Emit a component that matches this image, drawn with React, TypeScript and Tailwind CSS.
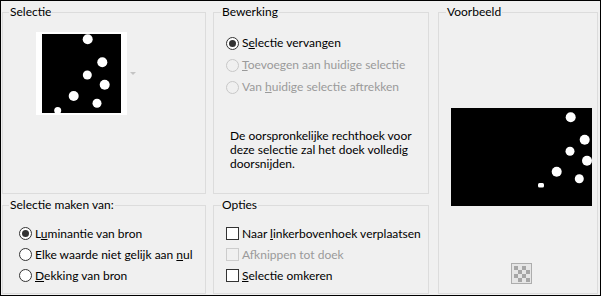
import React from 'react';

const font = { fontFamily: 'Lato, "Noto Sans", sans-serif' };

interface RadioProps {
  checked?: boolean;
  disabled?: boolean;
  children: React.ReactNode;
}

const Radio = ({ checked, disabled, children }: RadioProps) => (
  <div className="flex items-center h-[22px]">
    <span
      className={
        disabled
          ? 'w-[13px] h-[13px] rounded-full border border-[#c8c8c8] flex items-center justify-center'
          : 'w-[13px] h-[13px] rounded-full border border-[#333333] bg-white flex items-center justify-center'
      }
    >
      {checked && <span className="w-[7px] h-[7px] rounded-full bg-[#333333]" />}
    </span>
    <span className={disabled ? 'ml-[3px] text-[#9a9a9a]' : 'ml-[3px] text-black'}>{children}</span>
  </div>
);

interface CheckProps {
  disabled?: boolean;
  children: React.ReactNode;
}

const Check = ({ disabled, children }: CheckProps) => (
  <div className="flex items-center h-[21px]">
    <span
      className={
        disabled
          ? 'w-[13px] h-[13px] border border-[#cccccc]'
          : 'w-[13px] h-[13px] border border-[#333333] bg-white'
      }
    />
    <span className={disabled ? 'ml-[3px] text-[#9a9a9a]' : 'ml-[3px] text-black'}>{children}</span>
  </div>
);

const Legend = ({ children, ml = 'ml-[7px]' }: { children: React.ReactNode; ml?: string }) => (
  <legend className={`${ml} px-[1px] leading-[16px] text-black`}>{children}</legend>
);

const Thumb = () => (
  <svg width="91" height="83" viewBox="0 0 91 83">
    <rect width="91" height="83" fill="#ffffff" />
    <rect x="6" y="2" width="79" height="79" fill="#000000" />
    <g fill="#ffffff">
      <circle cx="51.7" cy="7.3" r="5" />
      <circle cx="66.3" cy="30.3" r="5" />
      <circle cx="51.3" cy="43" r="4.5" />
      <circle cx="68.7" cy="52.7" r="5" />
      <circle cx="37.7" cy="64" r="5" />
      <circle cx="61" cy="71.3" r="4.5" />
      <circle cx="21.7" cy="78.5" r="3.5" />
    </g>
    <rect x="0" y="81" width="91" height="2" fill="#ffffff" />
  </svg>
);

const Preview = () => (
  <svg width="141" height="98" viewBox="0 0 141 98">
    <rect width="141" height="98" fill="#000000" />
    <g fill="#ffffff">
      <circle cx="119.7" cy="9.3" r="5" />
      <circle cx="133.7" cy="31.7" r="5" />
      <circle cx="119" cy="43.3" r="4.5" />
      <circle cx="136" cy="52.7" r="5" />
      <circle cx="105.7" cy="63.7" r="5" />
      <circle cx="128.3" cy="70.7" r="4.5" />
      <rect x="87" y="75" width="6" height="4.5" rx="1.5" />
    </g>
  </svg>
);

const Checker = () => (
  <svg width="21" height="21" viewBox="0 0 21 21">
    <rect x="0.5" y="0.5" width="20" height="20" fill="#e6e6e6" stroke="#adadad" />
    <g fill="#a6a6a6">
      {[0, 1, 2, 3].map((r) =>
        [0, 1, 2, 3].map((c) =>
          (r + c) % 2 === 0 ? <rect key={`${r}-${c}`} x={3 + c * 4} y={3 + r * 4} width="4" height="4" /> : null
        )
      )}
    </g>
  </svg>
);

export default function App() {
  return (
    <div className="w-[601px] h-[296px] border border-black bg-[#f0f0f0] text-[12px] flex" style={font}>
      {/* left column */}
      <div className="flex flex-col w-[204px] ml-[1px] mt-[3px]">
        <fieldset className="h-[190px] border border-[#dcdcdc]">
          <Legend ml="ml-[6px]">Selectie</Legend>
          <div className="flex items-center mt-[12px] ml-[33px]">
            <Thumb />
            <svg width="6" height="4" viewBox="0 0 6 4" className="ml-[3px]">
              <path d="M0 0H6L3 3Z" fill="#c4c4c4" />
            </svg>
          </div>
        </fieldset>
        <fieldset className="h-[97px] mt-[3px] border border-[#dcdcdc]">
          <Legend ml="ml-[6px]">Selectie maken van:</Legend>
          <div className="mt-[10px] ml-[16px] flex flex-col">
            <div className="h-[21px] flex items-center">
              <Radio checked>
                L<u>u</u>minantie van bron
              </Radio>
            </div>
            <div className="h-[21px] flex items-center">
              <Radio>
                Elke waarde niet gelijk aan <u>n</u>ul
              </Radio>
            </div>
            <div className="h-[21px] flex items-center">
              <Radio>
                <u>D</u>ekking van bron
              </Radio>
            </div>
          </div>
        </fieldset>
      </div>

      {/* middle column */}
      <div className="flex flex-col w-[216px] ml-[7px] mt-[3px]">
        <fieldset className="h-[190px] border border-[#dcdcdc]">
          <Legend>Bewerking</Legend>
          <div className="mt-[12px] ml-[12px] flex flex-col">
            <Radio checked>
              S<u>e</u>lectie vervangen
            </Radio>
            <Radio disabled>
              <u>T</u>oevoegen aan huidige selectie
            </Radio>
            <Radio disabled>
              Van <u>h</u>uidige selectie aftrekken
            </Radio>
          </div>
          <p className="mt-[31px] ml-[16px] leading-[14px] text-black">
            De oorspronkelijke rechthoek voor
            <br />
            deze selectie zal het doek volledig
            <br />
            doorsnijden.
          </p>
        </fieldset>
        <fieldset className="h-[97px] mt-[3px] border border-[#dcdcdc]">
          <Legend>Opties</Legend>
          <div className="mt-[10px] ml-[12px] flex flex-col">
            <Check>
              Naar <u>l</u>inkerbovenhoek verplaatsen
            </Check>
            <Check disabled>
              Af<u>k</u>nippen tot doek
            </Check>
            <Check>
              <u>S</u>electie omkeren
            </Check>
          </div>
        </fieldset>
      </div>

      {/* right column */}
      <div className="w-[160px] ml-[9px] mt-[3px]">
        <fieldset className="h-[290px] border border-[#dcdcdc]">
          <Legend>Voorbeeld</Legend>
          <div className="mt-[88px] ml-[12px] flex">
            <Preview />
          </div>
          <div className="mt-[57px] ml-[72px] flex">
            <Checker />
          </div>
        </fieldset>
      </div>
    </div>
  );
}
